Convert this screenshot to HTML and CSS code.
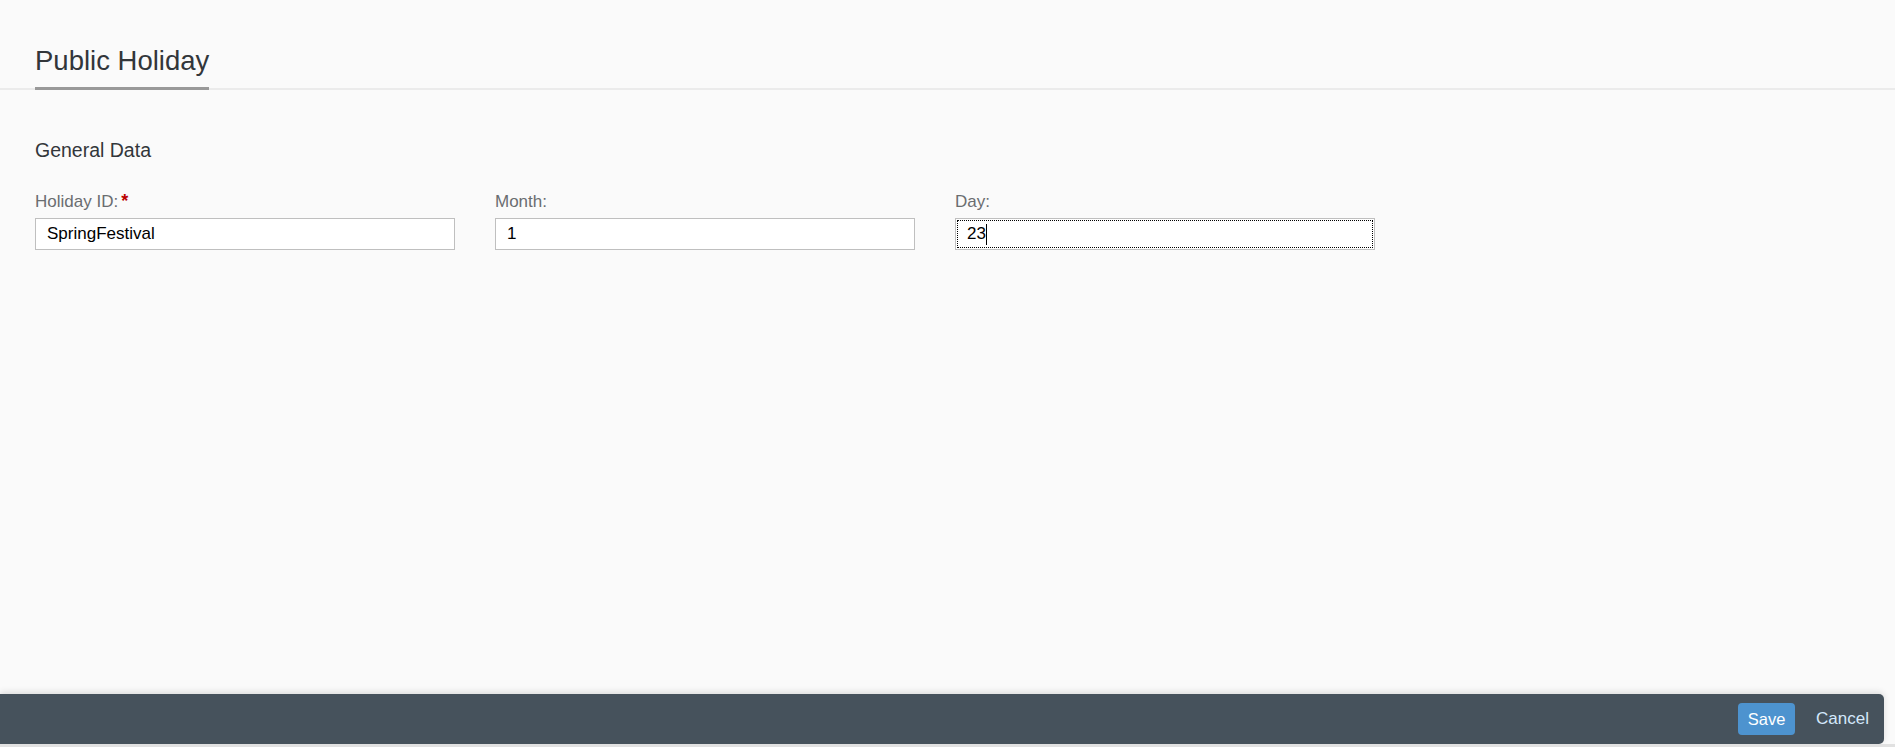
FILE: index.html
```html
<!DOCTYPE html>
<html lang="en">
<head>
<meta charset="utf-8">
<title>Public Holiday</title>
<link rel="stylesheet" href="styles.css">
</head>
<body>
<div class="page">
  <header class="header">
    <div class="tab">Public Holiday</div>
  </header>
  <main class="content">
    <h2 class="section-title">General Data</h2>
    <div class="form-grid">
      <div class="field">
        <label class="label">Holiday ID:<span class="req">*</span></label>
        <div class="input"><span class="value">SpringFestival</span></div>
      </div>
      <div class="field">
        <label class="label">Month:</label>
        <div class="input"><span class="value">1</span></div>
      </div>
      <div class="field">
        <label class="label">Day:</label>
        <div class="input focused"><span class="value">23</span><span class="caret"></span></div>
      </div>
    </div>
  </main>
  <footer class="footer">
    <button class="btn btn-save">Save</button>
    <button class="btn btn-cancel">Cancel</button>
  </footer>
  <div class="bottom-band"></div>
</div>
</body>
</html>
```
FILE: styles.css
```css
* { box-sizing: border-box; }
html, body { margin: 0; padding: 0; height: 100%; }
body {
  background: #fafafa;
  font-family: "Liberation Sans", Arial, sans-serif;
  color: #32363a;
}
.page {
  display: flex;
  flex-direction: column;
  height: 100vh;
}
.header {
  padding: 45px 0 0 35px;
  border-bottom: 2px solid #ebebeb;
}
.tab {
  display: inline-block;
  font-size: 27.5px;
  line-height: 31px;
  color: #32363a;
  padding-bottom: 11px;
  border-bottom: 3px solid #999999;
  margin-bottom: -2px;
}
.content {
  flex: 1;
  padding: 48px 35px 0 35px;
}
.section-title {
  margin: 0;
  font-weight: normal;
  font-size: 19.5px;
  line-height: 24px;
  color: #32363a;
}
.form-grid {
  display: grid;
  grid-template-columns: 420px 420px 420px;
  column-gap: 40px;
  margin-top: 30px;
}
.field {
  display: flex;
  flex-direction: column;
  gap: 6px;
}
.label {
  display: block;
  height: 20px;
  font-size: 17px;
  line-height: 20px;
  color: #6a6d70;
}
.req {
  color: #bb0000;
  margin-left: 3px;
  font-size: 18px;
  font-weight: bold;
  line-height: 1;
}
.input {
  height: 32px;
  background: #ffffff;
  border: 1px solid #bfbfbf;
  padding: 0 11px;
  display: flex;
  align-items: center;
  font-size: 17px;
  color: #000000;
}
.input.focused {
  outline: 1px dotted #000000;
  outline-offset: -3px;
}
.caret {
  display: inline-block;
  width: 1px;
  height: 21px;
  background: #000000;
}
.footer {
  height: 50px;
  margin-right: 11px;
  background: #46525c;
  border-radius: 0 5px 5px 0;
  box-shadow: 0 -2px 6px rgba(0, 0, 0, 0.12);
  display: flex;
  align-items: center;
  justify-content: flex-end;
  gap: 11px;
  padding-right: 5px;
}
.btn {
  font-family: "Liberation Sans", Arial, sans-serif;
  font-size: 16.5px;
  height: 32px;
  border: none;
  border-radius: 4px;
  padding: 0 10px;
  cursor: pointer;
}
.btn-save {
  background: #4d93cf;
  color: #ffffff;
  width: 57px;
  padding: 0;
}
.btn-cancel {
  background: transparent;
  color: #d4e8fb;
  font-size: 17px;
}
.bottom-band {
  height: 3px;
  background: #e1e1e1;
}
```
